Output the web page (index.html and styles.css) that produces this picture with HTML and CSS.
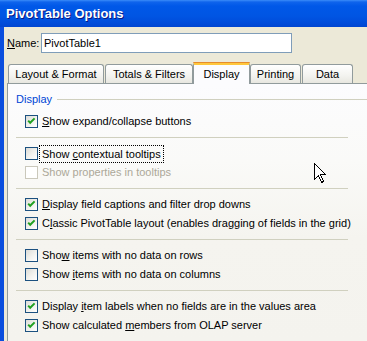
FILE: index.html
```html
<!DOCTYPE html>
<html>
<head>
<meta charset="utf-8">
<link rel="stylesheet" href="styles.css">
</head>
<body>
<div class="window">
  <div class="titlebar">PivotTable Options</div>
  <div class="main">
    <div class="name-row">
      <span class="name-label"><u>N</u>ame:</span>
      <div class="input">PivotTable1</div>
    </div>
    <div class="tabs">
      <div class="tab t1">Layout &amp; Format</div>
      <div class="tab t2">Totals &amp; Filters</div>
      <div class="tab t3 active">Display</div>
      <div class="tab t4">Printing</div>
      <div class="tab t5">Data</div>
    </div>
    <div class="panel">
      <div class="group-title"><span class="group-text">Display</span><span class="group-line"></span></div>
      <div class="section">
        <div class="row"><span class="cb checked"><svg viewBox="0 0 11 11" width="11" height="11"><polyline points="2.2,4.6 4.2,6.8 8.6,2.4" /></svg></span><span class="lbl"><u>S</u>how expand/collapse buttons</span></div>
      </div>
      <div class="sep"></div>
      <div class="section">
        <div class="row"><span class="cb"></span><span class="lbl focus">Show <u>c</u>ontextual tooltips</span></div>
        <div class="row disabled"><span class="cb"></span><span class="lbl">Show properties in tooltips</span></div>
      </div>
      <div class="sep"></div>
      <div class="section">
        <div class="row"><span class="cb checked"><svg viewBox="0 0 11 11" width="11" height="11"><polyline points="2.2,4.6 4.2,6.8 8.6,2.4" /></svg></span><span class="lbl"><u>D</u>isplay field captions and filter drop downs</span></div>
        <div class="row"><span class="cb checked"><svg viewBox="0 0 11 11" width="11" height="11"><polyline points="2.2,4.6 4.2,6.8 8.6,2.4" /></svg></span><span class="lbl">C<u>l</u>assic PivotTable layout (enables dragging of fields in the grid)</span></div>
      </div>
      <div class="sep"></div>
      <div class="section">
        <div class="row"><span class="cb"></span><span class="lbl">Sho<u>w</u> items with no data on rows</span></div>
        <div class="row"><span class="cb"></span><span class="lbl">Show <u>i</u>tems with no data on columns</span></div>
      </div>
      <div class="sep"></div>
      <div class="section">
        <div class="row"><span class="cb checked"><svg viewBox="0 0 11 11" width="11" height="11"><polyline points="2.2,4.6 4.2,6.8 8.6,2.4" /></svg></span><span class="lbl">Display <u>i</u>tem labels when no fields are in the values area</span></div>
        <div class="row"><span class="cb checked"><svg viewBox="0 0 11 11" width="11" height="11"><polyline points="2.2,4.6 4.2,6.8 8.6,2.4" /></svg></span><span class="lbl">Show calculated <u>m</u>embers from OLAP server</span></div>
      </div>
    </div>
  </div>
  <svg class="cursor" width="13" height="21" viewBox="0 0 13 21">
    <path d="M0.5,0.5 L0.5,16.5 L4.5,12.5 L7.5,19.5 L9.5,18.5 L6.5,11.5 L11.5,11.5 Z" fill="#fff" stroke="#000" stroke-width="1" shape-rendering="crispEdges"/>
  </svg>
</div>
</body>
</html>
```

FILE: styles.css
```css
html, body {
  margin: 0;
  padding: 0;
  background: #ECE9D8;
}

.window {
  position: relative;
  width: 367px;
  height: 341px;
  overflow: hidden;
  display: flex;
  flex-direction: column;
  font-family: "Liberation Sans", Arial, sans-serif;
  font-size: 11px;
  color: #000;
  background: #ECE9D8;
}

.titlebar {
  height: 27px;
  line-height: 28px;
  padding-left: 6px;
  font-weight: bold;
  font-size: 13px;
  color: #fff;
  text-shadow: 1px 1px 0 #0A1883;
  background: linear-gradient(#3A8CF9 0px, #0F64EC 2px, #0058E8 6px, #0055E3 16px, #004CDA 23px, #0045D0 27px);
  flex: none;
}

.main {
  flex: 1;
  display: flex;
  flex-direction: column;
  border-left: 4px solid #0A4EDE;
  padding-left: 3px;
  min-height: 0;
}

.name-row {
  display: flex;
  align-items: center;
  margin-top: 6px;
  height: 20px;
}

.name-label {
  width: 34px;
}

.input {
  box-sizing: border-box;
  width: 251px;
  height: 20px;
  border: 1px solid #7F9DB9;
  background: #fff;
  padding-left: 2px;
  line-height: 18px;
}

.tabs {
  display: flex;
  align-items: flex-end;
  height: 22px;
  margin-top: 9px;
  margin-bottom: -1px;
  padding-left: 1px;
}

.tab {
  box-sizing: border-box;
  height: 19px;
  margin-bottom: 1px;
  border: 1px solid #919B9C;
  border-bottom: none;
  border-radius: 3px 3px 0 0;
  background: linear-gradient(#FFFFFF, #F3F3EF 60%, #E8E7E0);
  text-align: center;
  line-height: 19px;
}

.t1 { width: 96px; margin-right: 1px; }
.t2 { width: 88px; }
.t3 { width: 57px; }
.t4 { width: 51px; margin-right: 1px; }
.t5 { width: 51px; }

.tab.active {
  position: relative;
  z-index: 1;
  height: 22px;
  margin-bottom: 0;
  background: #FCFCFE;
  border-top: 3px solid #FFC73C;
  box-shadow: inset 0 0 0 0 transparent;
  line-height: 18px;
}

.tab.active::before {
  content: "";
  position: absolute;
  left: -1px;
  right: -1px;
  top: -3px;
  height: 1px;
  background: #E68B2C;
  border-radius: 2px 2px 0 0;
}

.panel {
  flex: 1;
  width: 372px;
  box-sizing: border-box;
  border-left: 1px solid #919B9C;
  border-top: 1px solid #919B9C;
  background: linear-gradient(#FCFCFE 0%, #FAFAF8 30%, #F5F4EF 60%, #F4F3EE 100%);
  padding: 9px 0 0 8px;
  display: flex;
  flex-direction: column;
}

.group-title {
  display: flex;
  align-items: center;
  height: 13px;
  line-height: 13px;
}

.group-text {
  color: #0046D5;
}

.group-line {
  flex: 1;
  height: 0;
  border-top: 1px solid #D0D0BF;
  margin-left: 5px;
}

.section {
  display: flex;
  flex-direction: column;
  padding-left: 9px;
}

.group-title + .section {
  margin-top: 6px;
}

.row {
  display: flex;
  align-items: center;
  height: 19px;
}

.cb {
  box-sizing: border-box;
  width: 13px;
  height: 13px;
  border: 1px solid #1C5180;
  background: linear-gradient(135deg, #DCDCD7 0%, #F2F2EE 55%, #FFFFFF 100%);
  display: flex;
  flex: none;
}

.cb svg polyline {
  fill: none;
  stroke: #21A121;
  stroke-width: 2;
}

.lbl {
  margin-left: 2px;
  padding: 0 2px;
  line-height: 15px;
  white-space: nowrap;
}

.lbl u {
  text-decoration: underline;
  text-underline-offset: 1px;
}

.lbl.focus {
  outline: 1px dotted #000;
  outline-offset: 0;
  line-height: 16px;
}

.row.disabled .cb {
  border-color: #CAC8BB;
  background: #fff;
}

.row.disabled .lbl {
  color: #ACA899;
}

.sep {
  width: 332px;
  height: 0;
  border-top: 1px solid #D0D0BF;
  margin: 6px 0 6px 0;
}

.cursor {
  position: absolute;
  left: 314px;
  top: 163px;
}
```
